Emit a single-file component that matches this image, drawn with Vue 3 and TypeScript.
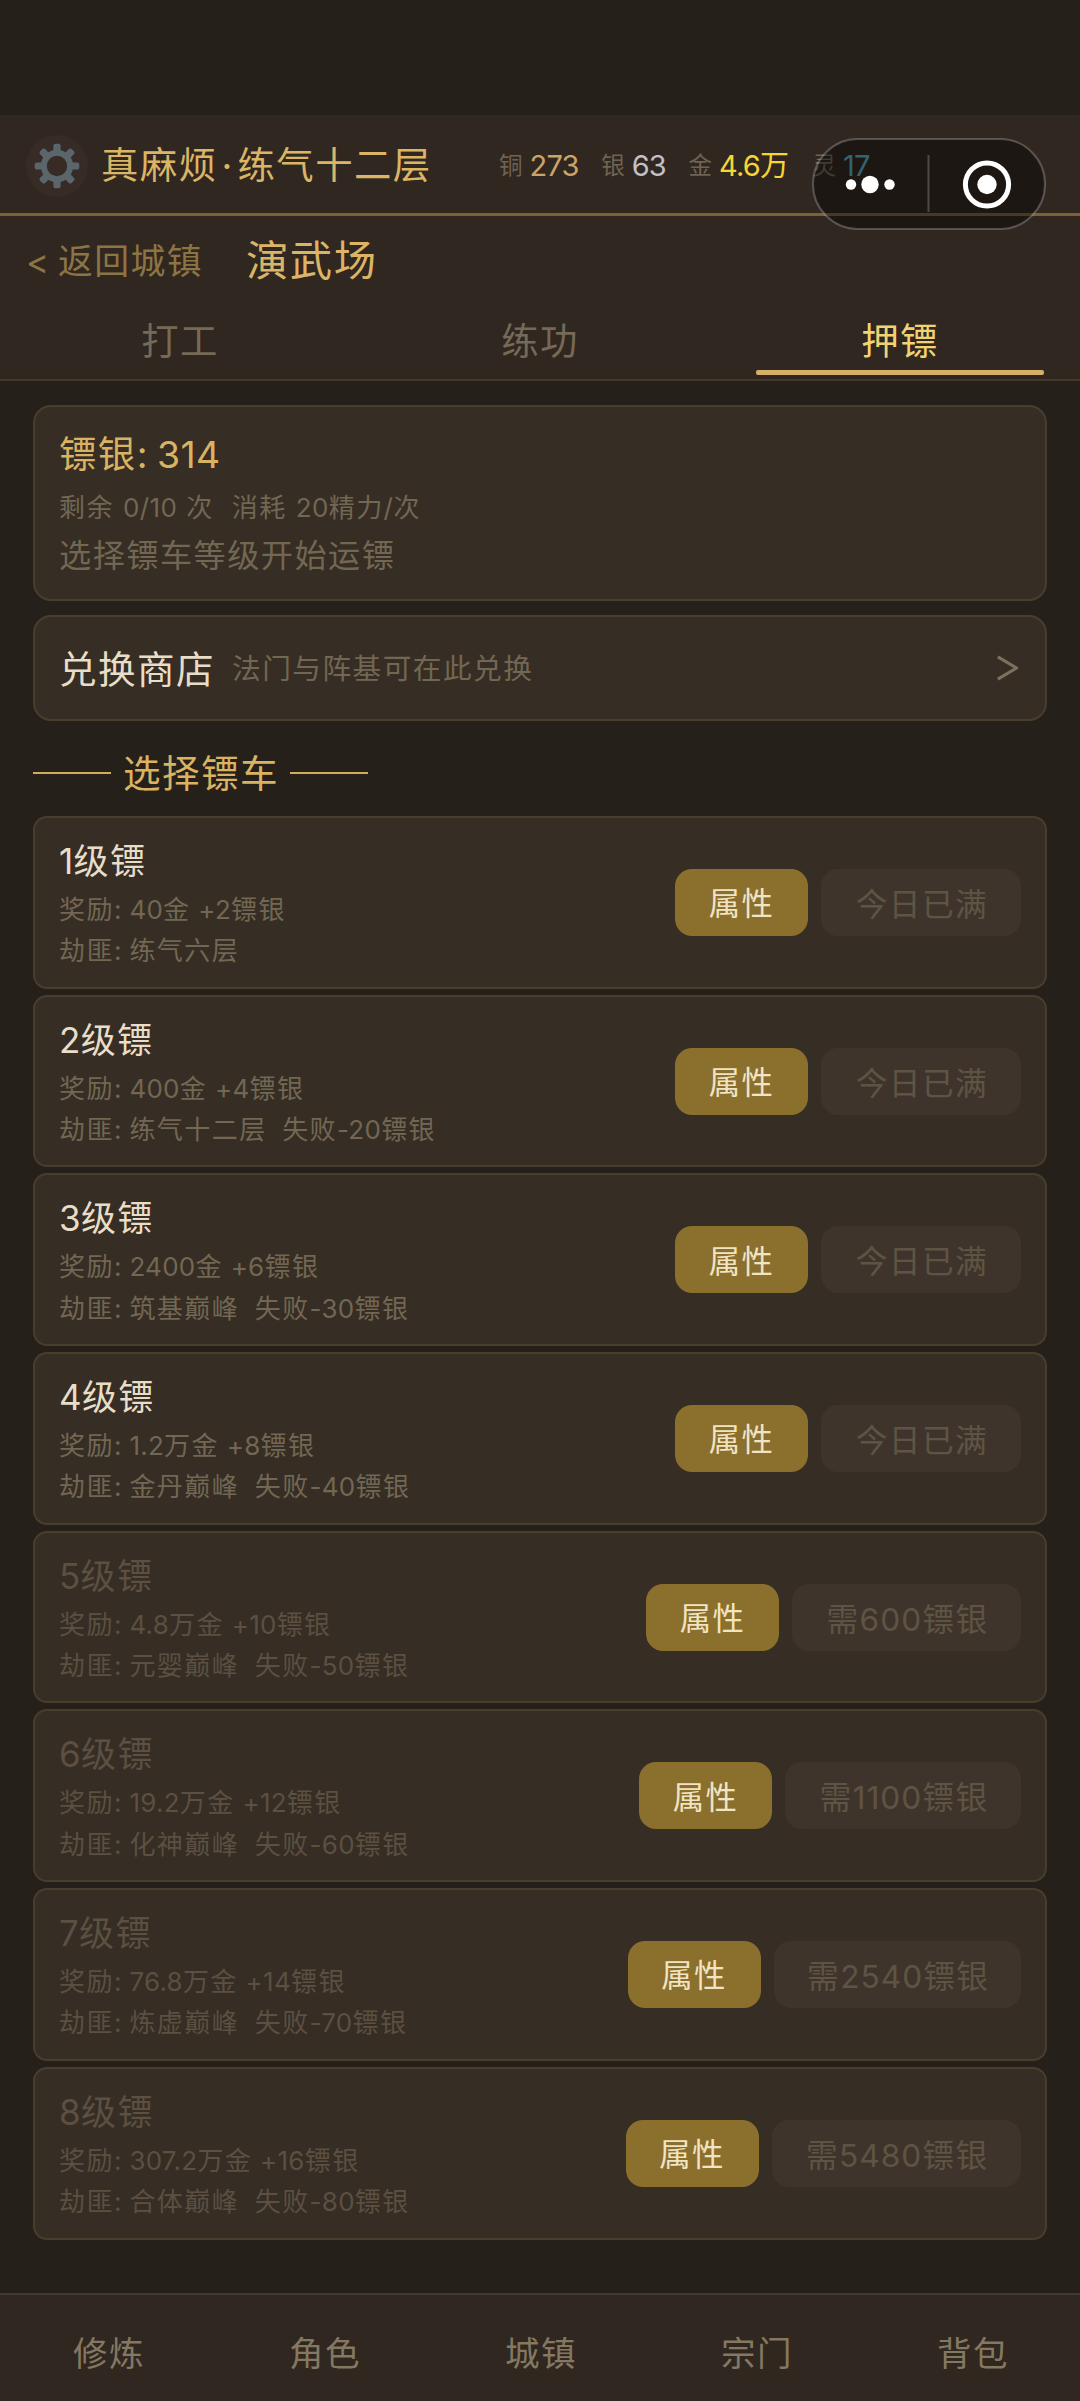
<script setup lang="ts">
import { h, type FunctionalComponent } from 'vue'

interface Cart {
  level: number
  reward: string
  bandit: string
  action: string
  actionWidth: number
  locked: boolean
}

// Mixed text: Latin runs (digits, punctuation, spaces) get tighter tracking than Han runs.
const Mixed: FunctionalComponent<{ t: string }> = (props) =>
  props.t
    .split(/([\u0020-\u007e\u00a0]+)/)
    .filter(Boolean)
    .map((run) => (/^[\u0020-\u007e\u00a0]/.test(run) ? h('span', { class: 'latin' }, run) : run))
Mixed.props = ['t']

const tabs = ['打工', '练功', '押镖']
const activeTab = '押镖'

const coins = [
  { key: 'copper', label: '铜', value: '273' },
  { key: 'silver', label: '银', value: '63' },
  { key: 'gold', label: '金', value: '4.6万' },
  { key: 'spirit', label: '灵', value: '17' },
]

const carts: Cart[] = [
  { level: 1, reward: '40金 +2镖银', bandit: '练气六层', action: '今日已满', actionWidth: 200, locked: false },
  { level: 2, reward: '400金 +4镖银', bandit: '练气十二层\u00a0 失败-20镖银', action: '今日已满', actionWidth: 200, locked: false },
  { level: 3, reward: '2400金 +6镖银', bandit: '筑基巅峰\u00a0 失败-30镖银', action: '今日已满', actionWidth: 200, locked: false },
  { level: 4, reward: '1.2万金 +8镖银', bandit: '金丹巅峰\u00a0 失败-40镖银', action: '今日已满', actionWidth: 200, locked: false },
  { level: 5, reward: '4.8万金 +10镖银', bandit: '元婴巅峰\u00a0 失败-50镖银', action: '需600镖银', actionWidth: 229, locked: true },
  { level: 6, reward: '19.2万金 +12镖银', bandit: '化神巅峰\u00a0 失败-60镖银', action: '需1100镖银', actionWidth: 236, locked: true },
  { level: 7, reward: '76.8万金 +14镖银', bandit: '炼虚巅峰\u00a0 失败-70镖银', action: '需2540镖银', actionWidth: 247.5, locked: true },
  { level: 8, reward: '307.2万金 +16镖银', bandit: '合体巅峰\u00a0 失败-80镖银', action: '需5480镖银', actionWidth: 249.5, locked: true },
]

const nav = ['修炼', '角色', '城镇', '宗门', '背包']
const teeth = [0, 45, 90, 135, 180, 225, 270, 315]
</script>

<template>
  <div class="screen">
    <header class="topbar">
      <div class="gear">
        <svg width="46" height="46" viewBox="-23 -23 46 46">
          <circle r="13.2" fill="none" stroke="#5a666b" stroke-width="6" />
          <rect
            v-for="a in teeth"
            :key="a"
            x="-3.6"
            y="-22.3"
            width="7.2"
            height="9"
            rx="2"
            fill="#5a666b"
            :transform="`rotate(${a})`"
          />
        </svg>
      </div>
      <div class="player">真麻烦<i class="dot">·</i>练气十二层</div>
      <div class="coins">
        <span v-for="c in coins" :key="c.key" class="coin" :class="c.key">
          <em>{{ c.label }}</em><b>{{ c.value }}</b>
        </span>
      </div>
      <svg class="capsule" width="234" height="92" viewBox="0 0 234 92">
        <rect x="1" y="1" width="232" height="90" rx="45" fill="#000" fill-opacity="0.4" />
        <rect x="1" y="1" width="232" height="90" rx="45" fill="none" stroke="#fff" stroke-opacity="0.23" stroke-width="2" />
        <circle cx="39" cy="46.5" r="5.2" fill="#fff" />
        <circle cx="58" cy="46.5" r="8.7" fill="#fff" />
        <circle cx="77.5" cy="46.5" r="5.2" fill="#fff" />
        <rect x="115.5" y="17" width="2" height="57" fill="#fff" fill-opacity="0.22" />
        <circle cx="175" cy="46.5" r="21.6" fill="none" stroke="#fff" stroke-width="5" />
        <circle cx="175" cy="46.5" r="9.7" fill="#fff" />
      </svg>
    </header>

    <div class="titlebar">
      <span class="back"><Mixed t="< 返回城镇" /></span>
      <h1>演武场</h1>
    </div>

    <nav class="tabs">
      <div v-for="t in tabs" :key="t" class="tab" :class="{ active: t === activeTab }">
        <span>{{ t }}</span>
      </div>
    </nav>

    <main>
      <section class="card summary">
        <p class="silver-count"><Mixed t="镖银: 314" /></p>
        <p class="remain"><Mixed :t="'剩余 0/10 次\u00a0 消耗 20精力/次'" /></p>
        <p class="hint">选择镖车等级开始运镖</p>
      </section>

      <section class="card shop">
        <span class="shop-name">兑换商店</span>
        <span class="shop-desc">法门与阵基可在此兑换</span>
        <svg class="arrow" width="22" height="26" viewBox="0 0 22 26">
          <path d="M0.8 1.8 L19.6 13 L0.8 24.2" fill="none" stroke="#7d705c" stroke-width="3.2" stroke-linejoin="round" />
        </svg>
      </section>

      <div class="section-title"><i></i><span>选择镖车</span><i></i></div>

      <section v-for="c in carts" :key="c.level" class="card cart" :class="{ locked: c.locked }">
        <div class="info">
          <p class="level"><Mixed :t="c.level + '级镖'" /></p>
          <p class="line"><Mixed :t="'奖励: ' + c.reward" /></p>
          <p class="line"><Mixed :t="'劫匪: ' + c.bandit" /></p>
        </div>
        <button class="btn attr">属性</button>
        <button class="btn off" :style="{ width: c.actionWidth + 'px' }"><Mixed :t="c.action" /></button>
      </section>
    </main>

    <footer class="bottom">
      <span v-for="n in nav" :key="n">{{ n }}</span>
    </footer>
  </div>
</template>

<style>
body {
  background: #26201a;
}
</style>

<style scoped>
.screen {
  width: 1080px;
  height: 2401px;
  box-sizing: border-box;
  padding-top: 115px;
  display: flex;
  flex-direction: column;
  overflow: hidden;
  background: #26201a;
  color: #726753;
  font-family: Inter, 'Noto Sans CJK SC', sans-serif;
  letter-spacing: 1.44px;
  white-space: nowrap;
}
.screen :deep(.latin) {
  letter-spacing: 0.3px;
  word-spacing: -1.5px;
  white-space: pre;
}
.screen .line :deep(.latin) {
  letter-spacing: 0.25px;
  word-spacing: 0.2px;
}
.screen .remain :deep(.latin) {
  letter-spacing: 0.4px;
  word-spacing: 1.3px;
}
.screen .off :deep(.latin) {
  letter-spacing: 1px;
}
p,
h1 {
  margin: 0;
  font-weight: 400;
}
i,
em,
b {
  font-style: normal;
  font-weight: 400;
}
.topbar {
  position: relative;
  flex: none;
  box-sizing: border-box;
  height: 101px;
  padding: 3px 0 0 26px;
  display: flex;
  align-items: center;
  background: #302721;
  border-bottom: 3px solid #7b6038;
}
.gear {
  width: 62px;
  height: 62px;
  border-radius: 50%;
  background: #362c25;
  display: flex;
  align-items: center;
  justify-content: center;
}
.player {
  width: 398px;
  margin-left: 13px;
  font-size: 37.4px;
  line-height: 56px;
  color: #dbb565;
}
.dot {
  display: inline-block;
  width: 20px;
  text-align: center;
}
.coins {
  display: flex;
  gap: 22.5px;
  letter-spacing: 0;
}
.coin {
  display: flex;
  align-items: center;
  gap: 7px;
}
.coin em {
  font-size: 23.5px;
  line-height: 40px;
  color: #6f6451;
}
.coin b {
  font-size: 29px;
  line-height: 40px;
  letter-spacing: -0.8px;
}
.coin.spirit {
  margin-left: 2px;
}
.copper b { color: #cda468; }
.silver b { color: #c0c0c6; }
.gold b { color: #f7d536; }
.spirit b { color: #55a6c0; }
.capsule {
  position: absolute;
  left: 812px;
  top: 23px;
  z-index: 2;
}
.titlebar {
  flex: none;
  height: 90px;
  padding-left: 26px;
  display: flex;
  align-items: center;
  background: #302721;
}
.back {
  width: 220px;
  font-size: 34.8px;
  line-height: 50px;
  color: #8d7443;
}
.titlebar h1 {
  font-size: 42.4px;
  line-height: 60px;
  color: #dbb565;
}
.tabs {
  flex: none;
  box-sizing: border-box;
  height: 75px;
  display: flex;
  background: #302721;
  border-bottom: 2px solid #43382a;
}
.tab {
  width: 360px;
  position: relative;
  text-align: center;
  font-size: 37.4px;
  line-height: 71px;
  color: #756a57;
}
.tab.active {
  color: #f2d272;
}
.tab.active::after {
  content: '';
  position: absolute;
  left: 36px;
  right: 36px;
  bottom: 4px;
  height: 5px;
  border-radius: 2px;
  background: #d5b06a;
}
main {
  flex: 1;
  padding: 24px 33px 0;
}
.card {
  box-sizing: border-box;
  background: #362d24;
  border: 2px solid #493d2e;
  border-radius: 18px;
  padding-left: 24px;
}
.summary {
  height: 196px;
  padding-top: 20px;
}
.silver-count {
  font-size: 37.4px;
  line-height: 56px;
  color: #d9b262;
}
.remain {
  font-size: 26px;
  line-height: 50px;
}
.hint {
  font-size: 32.2px;
  line-height: 46px;
}
.shop {
  height: 106px;
  margin-top: 14px;
  padding-right: 26px;
  display: flex;
  align-items: center;
}
.shop-name {
  width: 173px;
  margin-top: -4px;
  font-size: 37.6px;
  color: #e8dec8;
}
.shop-desc {
  margin-top: -4px;
  font-size: 28.7px;
}
.arrow {
  margin-left: auto;
}
.section-title {
  height: 95px;
  padding-top: 9px;
  box-sizing: border-box;
  display: flex;
  align-items: center;
  gap: 12px;
  font-size: 37.6px;
  color: #d9b262;
}
.section-title span {
  margin: -6px -1.5px 0 0;
}
.section-title i {
  width: 78px;
  height: 2px;
  background: #cfac58;
}
.cart {
  height: 172.7px;
  margin-bottom: 6px;
  padding-right: 24px;
  border-radius: 14px;
  display: flex;
  align-items: center;
  gap: 13px;
}
.info {
  flex: 1;
}
.level {
  font-size: 35px;
  line-height: 56px;
  color: #e8dec8;
}
.line {
  font-size: 26px;
  line-height: 41.5px;
}
.locked .level,
.locked .line {
  color: #5b5041;
}
.btn {
  flex: none;
  height: 67px;
  padding: 0 0 1px;
  border: 0;
  border-radius: 17px;
  font: inherit;
  font-size: 31.4px;
  letter-spacing: 1.44px;
  text-align: center;
}
.attr {
  width: 133px;
  background: #8b6f2d;
  color: #f0e4c2;
}
.off {
  padding-left: 2px;
  font-size: 31.7px;
  background: #3e342b;
  color: #5e5444;
}
.bottom {
  flex: none;
  box-sizing: border-box;
  height: 108px;
  display: flex;
  align-items: center;
  padding-top: 6px;
  background: #302721;
  border-top: 2px solid #43382b;
}
.bottom span {
  width: 216px;
  padding-left: 2px;
  box-sizing: border-box;
  text-align: center;
  font-size: 34.5px;
  color: #857860;
}
</style>
